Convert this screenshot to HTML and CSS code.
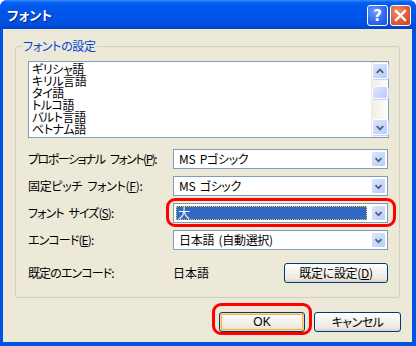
FILE: index.html
```html
<!DOCTYPE html>
<html lang="ja">
<head>
<meta charset="utf-8">
<link rel="stylesheet" href="styles.css">
</head>
<body>
<div class="window">
  <div class="titlebar">
    <span class="title">フォント</span>
    <div class="tbtns">
      <span class="tbtn help">?</span>
      <span class="tbtn close"><svg width="13" height="13" viewBox="0 0 13 13"><path d="M2 2 L11 11 M11 2 L2 11" stroke="#fff" stroke-width="2.4" stroke-linecap="square"/></svg></span>
    </div>
  </div>
  <div class="client">
    <div class="group">
      <div class="group-title">フォントの設定</div>
      <div class="listbox">
        <div class="items">
          <div>ギリシャ語</div>
          <div>キリル言語</div>
          <div>タイ語</div>
          <div>トルコ語</div>
          <div>バルト言語</div>
          <div>ベトナム語</div>
        </div>
        <div class="vscroll">
          <span class="sbtn"><svg width="15" height="15" viewBox="0 0 15 15"><path d="M4 9 L7.5 5.5 L11 9" fill="none" stroke="#4D6185" stroke-width="2"/></svg></span>
          <span class="thumb"></span>
          <span class="sbtn down"><svg width="15" height="15" viewBox="0 0 15 15"><path d="M4 6 L7.5 9.5 L11 6" fill="none" stroke="#4D6185" stroke-width="2"/></svg></span>
        </div>
      </div>
      <div class="row">
        <span class="label label-tight">プロポーショナル フォント(<u>P</u>):</span>
        <div class="combo"><span class="val">MS Pゴシック</span><span class="dd"><svg width="15" height="15" viewBox="0 0 15 15"><path d="M4 6 L7.5 9.5 L11 6" fill="none" stroke="#4D6185" stroke-width="2"/></svg></span></div>
      </div>
      <div class="row">
        <span class="label label-kanji">固定ピッチ フォント(<u>F</u>):</span>
        <div class="combo"><span class="val">MS ゴシック</span><span class="dd"><svg width="15" height="15" viewBox="0 0 15 15"><path d="M4 6 L7.5 9.5 L11 6" fill="none" stroke="#4D6185" stroke-width="2"/></svg></span></div>
      </div>
      <div class="row">
        <span class="label">フォント サイズ(<u>S</u>):</span>
        <div class="combo mark-wrap"><span class="val sel">大</span><span class="dd"><svg width="15" height="15" viewBox="0 0 15 15"><path d="M4 6 L7.5 9.5 L11 6" fill="none" stroke="#4D6185" stroke-width="2"/></svg></span><span class="mark mark-size"></span></div>
      </div>
      <div class="row">
        <span class="label">エンコード(<u>E</u>):</span>
        <div class="combo"><span class="val">日本語 (自動選択)</span><span class="dd"><svg width="15" height="15" viewBox="0 0 15 15"><path d="M4 6 L7.5 9.5 L11 6" fill="none" stroke="#4D6185" stroke-width="2"/></svg></span></div>
      </div>
      <div class="row row-default">
        <span class="label">既定のエンコード:</span>
        <span class="deftext">日本語</span>
        <span class="btn btn-def">既定に設定(<u>D</u>)</span>
      </div>
    </div>
    <div class="buttons">
      <span class="btn btn-ok mark-wrap">OK<span class="mark mark-ok"></span></span>
      <span class="btn btn-cancel">キャンセル</span>
    </div>
  </div>
</div>
</body>
</html>
```
FILE: styles.css
```css
* { box-sizing: border-box; }
html, body { margin: 0; padding: 0; }
body {
  width: 416px; height: 346px; overflow: hidden;
  font-family: "Noto Sans CJK JP", "Noto Sans", sans-serif;
  font-size: 12px;
  font-feature-settings: "palt" 1;
  color: #000;
}
.window {
  width: 416px; height: 346px;
  display: flex; flex-direction: column;
  background: #0054E3;
  border-radius: 7px 7px 0 0;
  overflow: hidden;
}
.titlebar {
  height: 29px; flex: none;
  display: flex; align-items: center; justify-content: space-between;
  padding: 0 5px 0 7px;
  background: linear-gradient(#3A8FFF 0, #0A64F5 2px, #0059EE 5px, #0055E8 14px, #0053E4 22px, #004BD8 26px, #0043C8 29px);
}
.title {
  color: #fff; font-weight: bold; font-size: 13px; line-height: 14px;
  text-shadow: 1px 1px 0 #0A1A7E;
  margin-top: 1px;
}
.tbtns { display: flex; gap: 2px; margin-top: 2px; }
.tbtn {
  width: 21px; height: 21px;
  border: 1px solid #fff; border-radius: 3px;
  display: flex; align-items: center; justify-content: center;
  color: #fff; font-family: "DejaVu Sans", sans-serif; font-weight: bold; font-size: 15px;
}
.help { background: radial-gradient(circle at 35% 30%, #6C9CFF 0, #2F6BF0 55%, #1A4FD8 100%); }
.close { background: radial-gradient(circle at 35% 30%, #F0906E 0, #DF5A36 55%, #C8401E 100%); }
.client {
  flex: 1;
  margin: 0 4px 4px 3px;
  background: #ECE9D8;
  padding: 17px 11px 0 12px;
  display: flex; flex-direction: column;
}
.group {
  width: 385px; height: 252px;
  border: 1px solid #D0D0BF; border-radius: 3px;
  padding: 0 9px 0 12px;
  display: flex; flex-direction: column;
}
.group-title {
  align-self: flex-start;
  margin: -7px 0 0 -6px; padding: 0 1px;
  background: #ECE9D8; color: #0046D5;
  line-height: 12px; height: 12px;
  letter-spacing: -0.3px;
}
.listbox {
  margin-top: 9px;
  width: 361px; height: 77px;
  border: 1px solid #7F9DB9; background: #fff;
  display: flex; justify-content: space-between;
}
.items { padding: 1px 0 0 3px; line-height: 12px; letter-spacing: -0.4px; }
.vscroll {
  width: 17px; height: 75px;
  background: linear-gradient(to right, #EEEDE5, #FDFDFA);
  display: flex; flex-direction: column; align-items: center;
  padding: 1px 0;
}
.sbtn, .thumb {
  width: 16px; height: 16px; flex: none;
  border: 1px solid #fff; border-radius: 2px;
  background: linear-gradient(135deg, #DCE6FD, #B9CCF8);
  box-shadow: 1px 1px 0 #C3D3FD;
  display: flex; align-items: center; justify-content: center;
}
.thumb { height: 13px; margin-top: 7px; }
.sbtn.down { margin-top: auto; margin-bottom: 1px; }
.row {
  display: flex; align-items: center;
  height: 20px; margin-top: 7px;
}
.listbox + .row { margin-top: 11px; }
.label {
  width: 145px; flex: none; line-height: 12px;
  white-space: nowrap; letter-spacing: -0.9px; word-spacing: 3px;
}
.label-tight { letter-spacing: -1.5px; word-spacing: 4px; }
.label-kanji { letter-spacing: -0.3px; }
.label u, .btn u { text-decoration: underline; }
.combo {
  width: 215px; height: 20px;
  border: 1px solid #7F9DB9; background: #fff;
  display: flex; align-items: center; justify-content: space-between;
  padding: 0 1px 0 2px;
}
.val { padding-left: 3px; line-height: 12px; white-space: nowrap; letter-spacing: -0.3px; word-spacing: 2px; }
.val.sel {
  flex: 1; margin-right: 4px; height: 14px; padding-left: 2px;
  background: #316AC5; color: #fff; line-height: 14px;
  outline: 1px dotted #F0C040; outline-offset: -1px;
}
.dd {
  width: 15px; height: 16px; flex: none;
  border: 1px solid #fff; border-radius: 2px;
  background: linear-gradient(135deg, #DCE6FD, #B9CCF8);
  display: flex; align-items: center; justify-content: center;
}
.mark-wrap { position: relative; }
.mark {
  position: absolute; border: 3px solid #FF0000; border-radius: 9px;
  pointer-events: none;
}
.mark-size { top: -6px; left: -8px; right: -9px; bottom: -5px; }
.row-default { margin-top: 13px; height: 20px; }
.deftext { width: 111px; line-height: 12px; }
.btn {
  height: 20px;
  border: 1px solid #003C74; border-radius: 3px;
  background: linear-gradient(#FFFFFF 0, #F4F3EE 40%, #ECEAE2 80%, #D8D2C6 100%);
  display: flex; align-items: center; justify-content: center;
  line-height: 12px; white-space: nowrap;
}
.btn-def { width: 104px; letter-spacing: -0.3px; }
.buttons {
  margin-top: 14px;
  display: flex; justify-content: flex-end; gap: 9px;
}
.btn-ok {
  width: 86px;
  box-shadow: inset 0 0 0 1px #FFD78C, inset 0 0 0 2px #F5B34A;
  font-family: "Liberation Sans", sans-serif;
}
.btn-cancel { width: 87px; letter-spacing: -0.5px; }
.mark-ok { top: -10px; left: -8px; right: -8px; bottom: -4px; }
```
